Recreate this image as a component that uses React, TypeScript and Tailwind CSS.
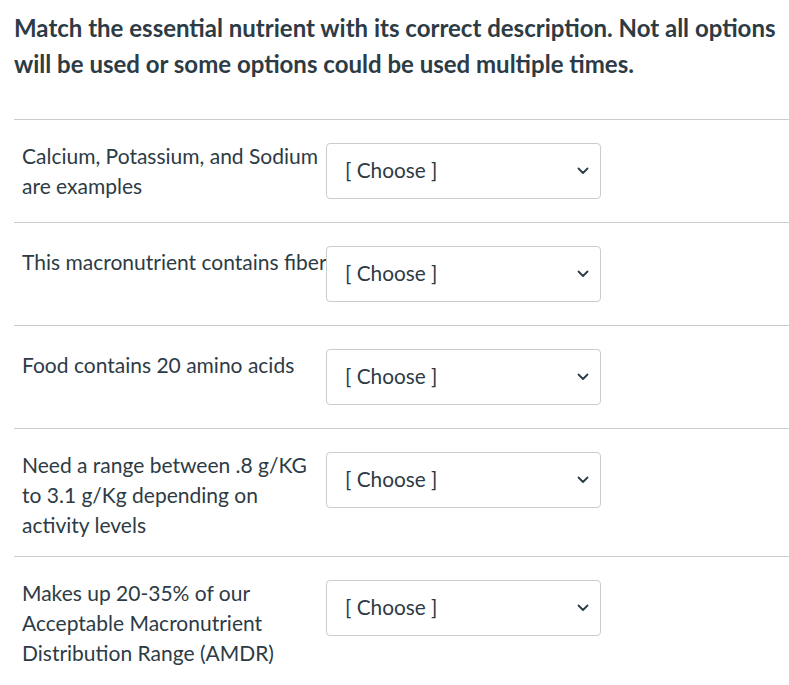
const rows = [
  { label: 'Calcium, Potassium, and Sodium are examples', single: false },
  { label: 'This macronutrient contains fiber', single: true },
  { label: 'Food contains 20 amino acids', single: true },
  { label: 'Need a range between .8 g/KG to 3.1 g/Kg depending on activity levels', single: false },
  { label: 'Makes up 20-35% of our Acceptable Macronutrient Distribution Range (AMDR)', single: false },
];

function ChooseSelect() {
  return (
    <div className="ml-[-2px] mt-[2px] mb-[7px] flex h-[56px] w-[275px] shrink-0 items-center justify-between rounded-[4px] border border-[#c7cdd1] bg-white pl-[18px] pr-[11px]">
      <span className="mb-[3px] text-[20.8px] text-[#2d3b45]">[ Choose ]</span>
      <svg width="12" height="8" viewBox="0 0 12 8" fill="none">
        <path d="M1.5 1.5 6 6l4.5-4.5" stroke="#2d3b45" strokeWidth="1.8" strokeLinecap="round" strokeLinejoin="round" />
      </svg>
    </div>
  );
}

export default function App() {
  return (
    <div className="min-h-screen bg-white pl-[14px] pt-[10px] text-[#2d3b45] font-['Lato','Liberation_Sans',sans-serif]">
      <p className="mb-[37px] text-[24px] font-bold leading-[36px]">
        Match the essential nutrient with its correct description. Not all options will be used or some options could be used multiple times.
      </p>
      <div>
        {rows.map((row, i) => (
          <div key={i} className="flex items-start border-t border-[#c7cdd1] pl-[8px] pt-[21px] pb-[16px]">
            <div className={row.single ? 'mt-[3px] w-[306px] shrink-0 text-[21px] leading-[30px]' : 'w-[306px] shrink-0 text-[21px] leading-[30px]'}>
              {row.label}
            </div>
            <ChooseSelect />
          </div>
        ))}
      </div>
    </div>
  );
}
